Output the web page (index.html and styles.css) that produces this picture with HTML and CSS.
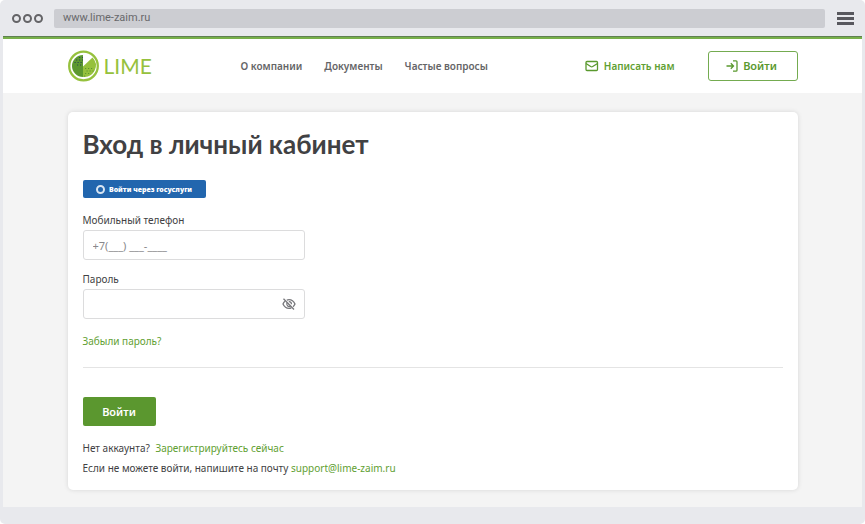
FILE: index.html
```html
<!DOCTYPE html>
<html lang="ru">
<head>
  <meta charset="UTF-8">
  <title>Вход в личный кабинет</title>
  <meta name="viewport" content="width=device-width, initial-scale=1.0">
  <link rel="stylesheet" href="styles.css">
</head>
<body>
  <div class="browser">
    <div class="browser-bar">
      <div class="dots"><span></span><span></span><span></span></div>
      <div class="address">www.lime-zaim.ru</div>
      <div class="burger"><span></span><span></span><span></span></div>
    </div>

    <div class="page">
      <header class="header">
        <div class="container header-row">
          <a href="#" class="logo">
            <svg width="32" height="32" viewBox="0 0 32 32">
              <circle cx="15.500" cy="16" r="14.300" fill="none" stroke="#96c13d" stroke-width="2.300"/>
              <path d="M15 5v22A11 11 0 0 1 15 5z" fill="#5c982f"/>
              <path d="M15 16.500L24.500 7.500A11.500 11.500 0 0 1 15 27z" fill="#96c13d"/>
              <g fill="none" stroke-width="1.200" stroke-dasharray="1.200 1.800">
                <path d="M11 7.500h4M8 10h7M6.500 12.500h8M9 15h5" stroke="#2c4a50"/>
                <path d="M17 18.500h9M18.500 21h7M17 23.500h6M16 26h3" stroke="#5c982f"/>
              </g>
            </svg>
            <span>LIME</span>
          </a>
          <nav class="nav">
            <a href="#">О компании</a>
            <a href="#">Документы</a>
            <a href="#">Частые вопросы</a>
          </nav>
          <a href="#" class="write-us">
            <svg width="14" height="12" viewBox="0 0 14 12" fill="none" stroke="#5a992e" stroke-width="1.300" stroke-linejoin="round">
              <rect x="1" y="1.500" width="11.500" height="9" rx="1"/>
              <path d="M1 3.500l4.700 3q1 .6 2 0l4.800-3"/>
            </svg>
            Написать нам
          </a>
          <button type="button" class="enter-btn">
            <svg width="12" height="12" viewBox="0 0 12 12" fill="none" stroke="#5a992e" stroke-width="1.300">
              <path d="M.5 6h6.700M4.800 3.300L7.500 6 4.800 8.700"/>
              <path d="M7 .8h3q1 0 1 1v8.400q0 1-1 1H7"/>
            </svg>
            Войти
          </button>
        </div>
      </header>

      <main class="content">
        <form class="container card">
          <h1>Вход в личный кабинет</h1>
          <button type="button" class="gos-btn"><span class="ring"></span>Войти через госуслуги</button>

          <div class="field">
            <label for="phone">Мобильный телефон</label>
            <input type="tel" id="phone" placeholder="+7(___) ___-____">
          </div>
          <div class="field">
            <label for="password">Пароль</label>
            <div class="password-box">
              <input type="password" id="password">
              <button type="button" class="eye-btn" aria-label="Показать пароль">
                <svg width="14" height="12" viewBox="0 0 14 12" fill="none" stroke="#77777b" stroke-width="1.300">
                  <path d="M4.800 2.200Q6 1.700 7 1.700q4 0 6 4.300-.7 1.600-1.900 2.700M9.300 9.900q-1.100.5-2.300.5Q3 10.400 1 6q.7-1.600 2-2.700"/>
                  <path d="M5.200 4.700a2.400 2.400 0 0 0 3.400 3.300M6.800 3.700a2.300 2.300 0 0 1 2.600 2.500"/>
                  <path d="M1.500.7l10.500 10.800"/>
                </svg>
              </button>
            </div>
          </div>

          <a href="#" class="forgot">Забыли пароль?</a>
          <hr>
          <button type="submit" class="submit-btn">Войти</button>
          <p class="note">Нет аккаунта? <a href="#" class="register">Зарегистрируйтесь сейчас</a></p>
          <p class="note">Если не можете войти, напишите на почту <a href="#">support@lime-zaim.ru</a></p>
        </form>
      </main>
    </div>
  </div>
</body>
</html>
```

FILE: styles.css
```css
* {
  box-sizing: border-box;
}
body {
  margin: 0;
  background: #fff;
  font-family: "Noto Sans", sans-serif;
  font-size: 10px;
  line-height: 20px;
  color: #414143;
}
a {
  color: #5fa032;
  text-decoration: none;
}
button, input {
  font-family: inherit;
}
button {
  cursor: pointer;
}
svg {
  flex: none;
}

/* browser frame */
.browser {
  min-height: 100vh;
  padding: 0 3px 17px;
  background: #e8e9ed;
  border-radius: 5px;
}
.browser-bar {
  display: flex;
  align-items: center;
  height: 36px;
  padding: 0 8px 0 9px;
}
.dots {
  display: flex;
  gap: 2px;
  width: 42px;
}
.dots span {
  width: 9px;
  height: 9px;
  border: 2px solid #646467;
  border-radius: 50%;
}
.address {
  flex: 1;
  height: 19px;
  padding-left: 9px;
  border-radius: 2px;
  background: #cccdd2;
  font-family: Roboto, sans-serif;
  font-size: 11px;
  line-height: 18px;
  color: #68686b;
}
.burger {
  display: flex;
  flex-direction: column;
  gap: 2px;
  width: 17px;
  margin-left: 12px;
}
.burger span {
  height: 3px;
  background: #58585e;
}

/* header */
.page {
  border-top: 1px solid #5f8052;
  background: #f4f4f4;
}
.header {
  border-top: 2px solid #78b04a;
  background: #fff;
}
.container {
  max-width: 730px;
  margin: 0 auto;
}
.header-row {
  display: flex;
  align-items: center;
  height: 54px;
}
.logo {
  display: flex;
  align-items: center;
  gap: 4px;
  width: 173px;
  font-family: Lato, sans-serif;
  font-size: 21px;
  color: #96c13d;
}
.nav {
  display: flex;
  gap: 22px;
  margin-right: auto;
}
.nav a {
  font-weight: 600;
  color: #656567;
}
.write-us {
  display: flex;
  align-items: center;
  gap: 5px;
  margin-right: 33px;
  font-weight: 600;
}
.enter-btn {
  display: flex;
  align-items: center;
  justify-content: center;
  gap: 5px;
  width: 90px;
  height: 30px;
  padding: 0 8px 0 6px;
  border: 1px solid #74ab50;
  border-radius: 3px;
  background: #fff;
  font-size: 11px;
  font-weight: 600;
  line-height: 14px;
  color: #5a992e;
}

/* login card */
.content {
  padding: 19px 16px 17px;
}
.card {
  padding: 18px 15px 12px;
  border-radius: 5px;
  background: #fff;
  box-shadow: 0 0 5px rgba(0, 0, 0, 0.12);
}
h1 {
  margin: 0 0 22px;
  font-family: Lato, sans-serif;
  font-size: 26px;
  font-weight: 700;
  line-height: 28px;
}
.gos-btn {
  display: flex;
  align-items: center;
  justify-content: center;
  gap: 4px;
  width: 123px;
  height: 18px;
  margin-bottom: 12px;
  padding: 0;
  border: none;
  border-radius: 2px;
  background: #2266ae;
  font-size: 7px;
  font-weight: 900;
  color: #fff;
}
.ring {
  width: 9px;
  height: 9px;
  border: 2px solid #d8e5f2;
  border-radius: 50%;
}
.field {
  width: 222px;
  margin-bottom: 9px;
}
.field label {
  display: block;
}
.field input {
  display: block;
  width: 100%;
  height: 30px;
  padding: 0 9px;
  border: 1px solid #dcdcdd;
  border-radius: 3px;
  background: #fff;
  font-size: 11px;
  color: #414143;
}
.field input::placeholder {
  color: #88888b;
}
.password-box {
  position: relative;
}
.eye-btn {
  position: absolute;
  top: 9px;
  right: 9px;
  display: flex;
  padding: 0;
  border: none;
  background: none;
}
.forgot {
  display: block;
  width: max-content;
  margin-top: 12px;
}
hr {
  margin: 16px 0 29px;
  border: none;
  border-top: 1px solid #e4e4e4;
}
.submit-btn {
  display: block;
  width: 73px;
  height: 29px;
  margin-bottom: 12px;
  padding: 0;
  border: none;
  border-radius: 2px;
  background: #5b972f;
  font-size: 11px;
  font-weight: 600;
  line-height: 14px;
  color: #fff;
}
.note {
  margin: 0;
}
.register {
  margin-left: 3px;
}
```
